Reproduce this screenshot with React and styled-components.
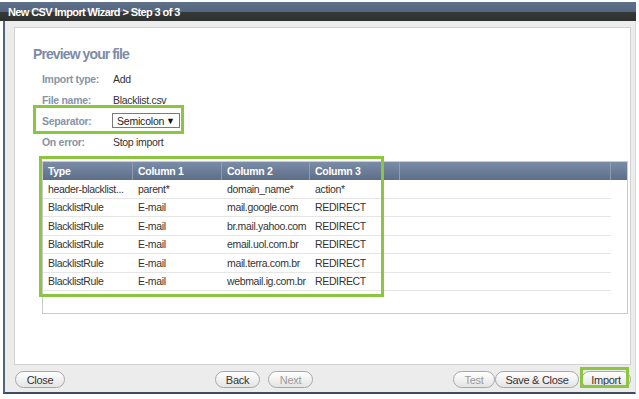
import React from "react";
import styled, { createGlobalStyle } from "styled-components";

const GlobalStyle = createGlobalStyle`
  html, body { margin: 0; padding: 0; background: #ffffff; }
  body { font-family: "Liberation Sans", Arial, sans-serif; }
  * { box-sizing: border-box; }
`;

const Page = styled.div`
  width: 639px;
  height: 399px;
  padding-top: 2px;
  background: #fff;
`;

const Dialog = styled.div`
  width: 636px;
  display: flex;
  flex-direction: column;
`;

const TitleBar = styled.div`
  height: 19px;
  background: linear-gradient(#5e708a 0%, #54657e 52%, #363838 53%, #2f3131 100%);
  color: #fff;
  font-weight: bold;
  font-size: 11px;
  letter-spacing: -0.6px;
  padding-left: 8px;
  display: flex;
  align-items: center;
  white-space: nowrap;
`;

const Frame = styled.div`
  margin-left: 3px;
  background: #ececec;
  border-left: 2px solid #56647a;
  border-right: 1px solid #dadada;
  border-bottom: 2px solid #3e4b60;
  padding: 6px 4px 0 9px;
  display: flex;
  flex-direction: column;
`;

const Panel = styled.div`
  height: 338px;
  background: #fff;
  border: 1px solid #d2d2d2;
  padding: 18px 2px 0 18px;
`;

const Heading = styled.h1`
  margin: 0;
  font-size: 14px;
  line-height: 16px;
  letter-spacing: -0.9px;
  font-weight: bold;
  color: #7d8ca6;
`;

const Form = styled.div`
  margin: 6px 0 0 9px;
  display: flex;
  flex-direction: column;
`;

const FieldRow = styled.div`
  position: relative;
  height: 21px;
  display: flex;
  align-items: center;
  font-size: 10.5px;
  letter-spacing: -0.3px;
`;

const Label = styled.span`
  width: 71px;
  font-weight: bold;
  color: #8794a8;
`;

const Value = styled.span`
  color: #333;
`;

const Select = styled.div`
  width: 68px;
  height: 15px;
  border: 1px solid #7a7a7a;
  background: #fff;
  color: #222;
  display: flex;
  align-items: center;
  justify-content: space-between;
  padding: 0 4px 0 4px;
  margin-left: -1px;
  font-size: 10.5px;
  letter-spacing: -0.2px;
`;

const Arrow = styled.span`
  font-size: 9px;
  letter-spacing: 0;
  color: #111;
`;

const Highlight = styled.div`
  position: absolute;
  border: 3px solid #8cc63f;
  pointer-events: none;
  left: ${(p) => p.$left}px;
  top: ${(p) => p.$top}px;
  width: ${(p) => p.$w}px;
  height: ${(p) => p.$h}px;
`;

const GridWrap = styled.div`
  position: relative;
  margin: 9px 0 0 9px;
  height: 153px;
  border: 1px solid #cbcbcb;
  background: #fff;
`;

const COLS = "90px 89px 88px 90px 1fr 16px";

const HeaderRow = styled.div`
  display: grid;
  grid-template-columns: ${COLS};
  height: 18px;
  background: linear-gradient(#7b8ca6, #5d6e88);
`;

const HeaderCell = styled.div`
  color: #fff;
  font-weight: bold;
  font-size: 10.5px;
  letter-spacing: -0.3px;
  padding-left: 5px;
  display: flex;
  align-items: center;
  border-right: 1px solid #8f9db3;
  &:last-child { border-right: none; }
`;

const Body = styled.div`
  margin-right: 16px;
`;

const Row = styled.div`
  display: grid;
  grid-template-columns: 90px 89px 88px 90px 1fr;
  height: 18.5px;
  border-bottom: 1px solid #e6e6e6;
`;

const Cell = styled.div`
  font-size: 10.5px;
  letter-spacing: -0.35px;
  color: #333;
  padding-left: 5px;
  display: flex;
  align-items: center;
  white-space: nowrap;
  overflow: hidden;
`;

const ButtonBar = styled.div`
  height: 27px;
  display: flex;
  align-items: flex-start;
  padding: 6px 0 0 1px;
`;

const Button = styled.button`
  height: 17px;
  width: ${(p) => p.$w}px;
  margin-left: ${(p) => p.$ml || 0}px;
  border: 1px solid #a8a8a8;
  border-radius: 9px;
  background: linear-gradient(#ffffff, #e4e4e4);
  font-family: "Liberation Sans", Arial, sans-serif;
  font-size: 11px;
  letter-spacing: -0.3px;
  color: ${(p) => (p.disabled ? "#9a9a9a" : "#333")};
  padding: 0;
  display: flex;
  align-items: center;
  justify-content: center;
`;

const ButtonSlot = styled.div`
  position: relative;
  margin-left: ${(p) => p.$ml || 0}px;
  display: flex;
`;

const rows = [
  ["header-blacklist...", "parent*", "domain_name*", "action*"],
  ["BlacklistRule", "E-mail", "mail.google.com", "REDIRECT"],
  ["BlacklistRule", "E-mail", "br.mail.yahoo.com", "REDIRECT"],
  ["BlacklistRule", "E-mail", "email.uol.com.br", "REDIRECT"],
  ["BlacklistRule", "E-mail", "mail.terra.com.br", "REDIRECT"],
  ["BlacklistRule", "E-mail", "webmail.ig.com.br", "REDIRECT"],
];

export default function App() {
  return (
    <>
      <GlobalStyle />
      <Page>
        <Dialog>
          <TitleBar>New CSV Import Wizard &gt; Step 3 of 3</TitleBar>
          <Frame>
            <Panel>
              <Heading>Preview your file</Heading>
              <Form>
                <FieldRow>
                  <Label>Import type:</Label>
                  <Value>Add</Value>
                </FieldRow>
                <FieldRow>
                  <Label>File name:</Label>
                  <Value>Blacklist.csv</Value>
                </FieldRow>
                <FieldRow>
                  <Label>Separator:</Label>
                  <Select>
                    <span>Semicolon</span>
                    <Arrow>▼</Arrow>
                  </Select>
                  <Highlight $left={-9} $top={-5} $w={151} $h={29} />
                </FieldRow>
                <FieldRow>
                  <Label>On error:</Label>
                  <Value>Stop import</Value>
                </FieldRow>
              </Form>
              <GridWrap>
                <HeaderRow>
                  <HeaderCell>Type</HeaderCell>
                  <HeaderCell>Column 1</HeaderCell>
                  <HeaderCell>Column 2</HeaderCell>
                  <HeaderCell>Column 3</HeaderCell>
                  <HeaderCell />
                  <HeaderCell />
                </HeaderRow>
                <Body>
                  {rows.map((r, i) => (
                    <Row key={i}>
                      {r.map((c, j) => (
                        <Cell key={j}>{c}</Cell>
                      ))}
                      <Cell />
                    </Row>
                  ))}
                </Body>
                <Highlight $left={-4} $top={-6} $w={345} $h={141} />
              </GridWrap>
            </Panel>
            <ButtonBar>
              <Button $w={50}>Close</Button>
              <Button $w={45} $ml={150}>Back</Button>
              <Button $w={45} $ml={8} disabled>Next</Button>
              <Button $w={42} $ml={140} disabled>Test</Button>
              <Button $w={84}>Save &amp; Close</Button>
              <ButtonSlot $ml={2}>
                <Button $w={50}>Import</Button>
                <Highlight $left={-1} $top={-4} $w={49} $h={21} />
              </ButtonSlot>
            </ButtonBar>
          </Frame>
        </Dialog>
      </Page>
    </>
  );
}
